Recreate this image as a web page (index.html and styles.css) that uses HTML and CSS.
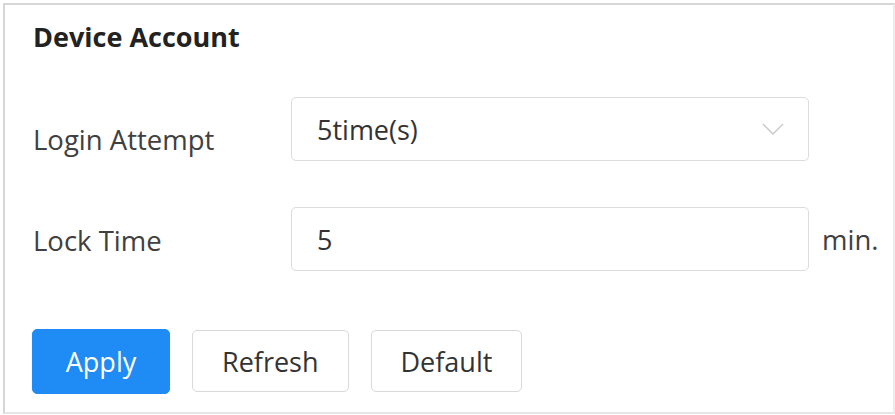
FILE: index.html
```html
<!DOCTYPE html>
<html lang="en">
<head>
  <meta charset="UTF-8">
  <meta name="viewport" content="width=device-width, initial-scale=1.0">
  <title>Device Account</title>
  <link rel="stylesheet" href="styles.css">
</head>
<body>
  <div class="panel">
    <div class="panel-title">Device Account</div>

    <div class="form-row first">
      <label class="form-label">Login Attempt</label>
      <div class="select-box">
        <span class="select-value">5time(s)</span>
        <svg class="arrow" width="22" height="12" viewBox="0 0 22 12">
          <polyline points="1,1 11,11 21,1" fill="none" stroke="#c8c8c8" stroke-width="1.4"/>
        </svg>
      </div>
    </div>

    <div class="form-row">
      <label class="form-label">Lock Time</label>
      <input class="text-input" type="text" value="5">
      <span class="unit">min.</span>
    </div>

    <div class="actions">
      <button class="btn primary">Apply</button>
      <button class="btn">Refresh</button>
      <button class="btn">Default</button>
    </div>
  </div>
</body>
</html>
```

FILE: styles.css
```css
* {
  box-sizing: border-box;
  margin: 0;
  padding: 0;
}

body {
  font-family: "Open Sans", "Noto Sans", Arial, sans-serif;
  background: #fff;
  color: #333;
}

.panel {
  width: 892px;
  height: 411px;
  margin: 3px 0 0 3px;
  border: 2px solid #d6d6d6;
  border-right-color: #ececec;
  border-bottom-color: #e6e6e6;
  padding: 13px 0 0 28px;
}

.panel-title {
  font-size: 27px;
  font-weight: bold;
  color: #222;
  line-height: 38px;
}

.form-row {
  display: flex;
  align-items: center;
  margin-top: 46px;
}

.form-row.first {
  margin-top: 41px;
}

.form-label {
  width: 258px;
  font-size: 27.5px;
  color: #404040;
  padding-top: 2px;
}

.form-row.first .form-label {
  padding-top: 20px;
}

.select-box,
.text-input {
  width: 518px;
  height: 64px;
  border: 1.5px solid #dcdcdc;
  border-radius: 5px;
  background: #fff;
  font-family: inherit;
  font-size: 27px;
  color: #333;
  padding-left: 25px;
}

.select-box {
  display: flex;
  align-items: center;
  justify-content: space-between;
  padding-right: 24px;
}

.arrow {
  display: block;
}

.text-input {
  outline: none;
}

.unit {
  margin-left: 13px;
  font-size: 27.5px;
  color: #404040;
}

.actions {
  display: flex;
  gap: 22px;
  margin-top: 59px;
  margin-left: -1px;
}

.btn {
  height: 62px;
  padding: 0 29px;
  border: 1.5px solid #d9d9d9;
  border-radius: 5px;
  background: #fff;
  font-family: inherit;
  font-size: 27px;
  color: #333;
}

.btn.primary {
  width: 138px;
  height: 65px;
  margin-top: -1px;
  border-color: #1f8bf5;
  background: #1f8bf5;
  color: #fff;
}
```
